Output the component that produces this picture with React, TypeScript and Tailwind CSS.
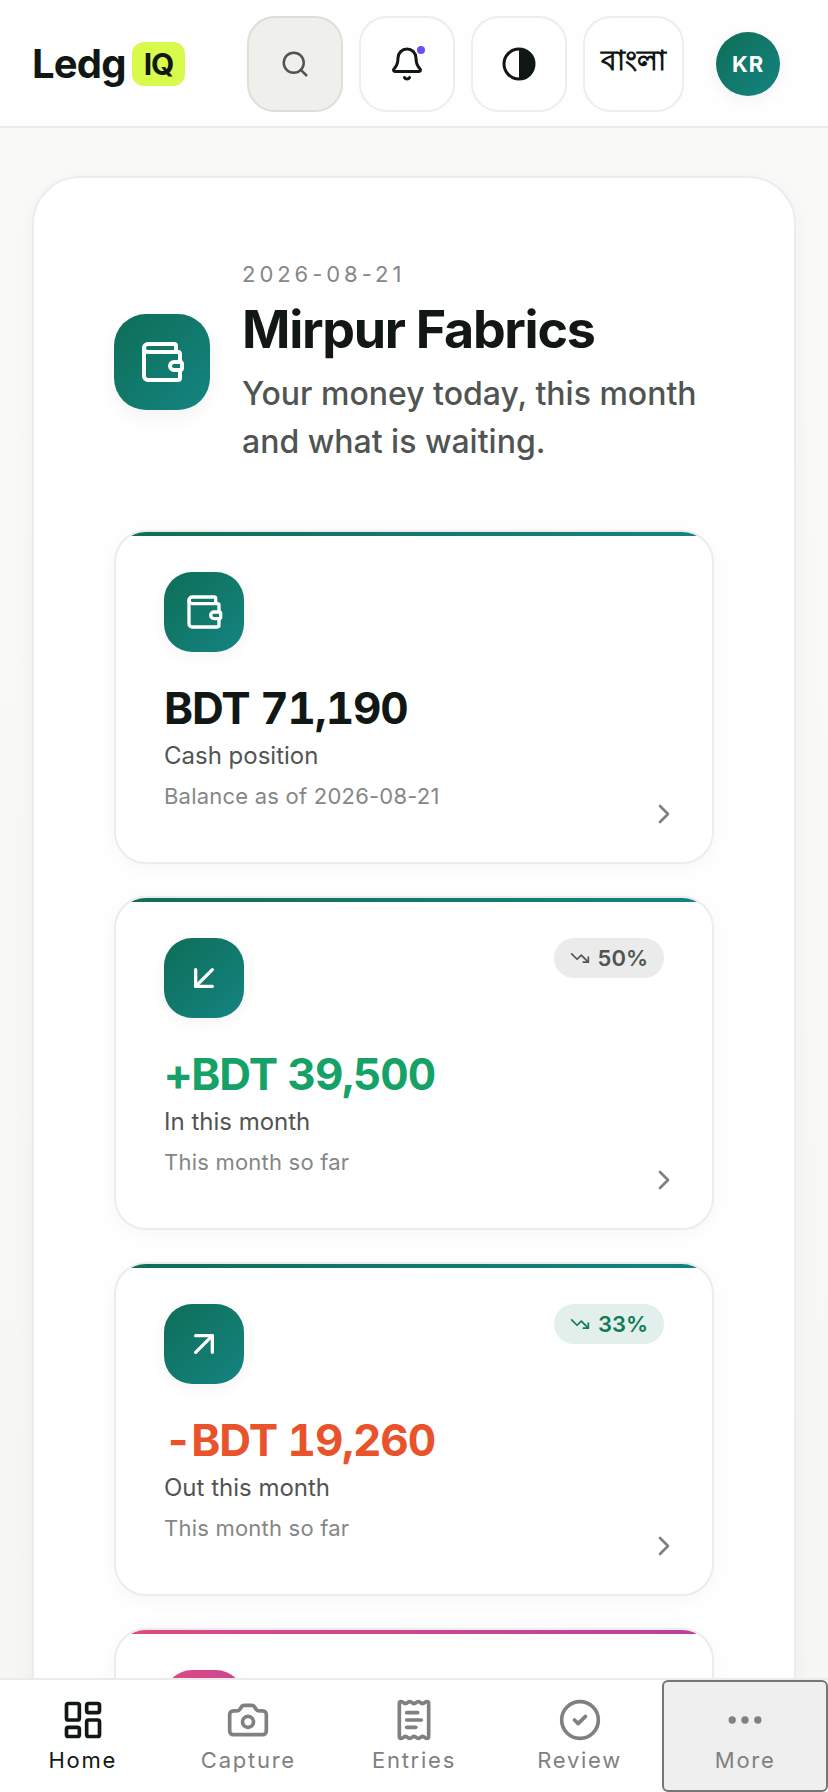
import { ArrowDownLeft, ArrowUpRight, Bell, Camera, ChevronRight, CircleCheck, Clock, Ellipsis, LayoutDashboard, LucideIcon, ReceiptText, Search, TrendingDown, Wallet } from "lucide-react";

type CardType = {
    icon: LucideIcon;
    value: string;
    label: string;
    note: string;
    valueColor: string;
    tone: string;
    bar: string;
    badge?: string;
    badgeColor?: string;
};

const green = "bg-linear-to-br from-[#0f6e56] to-[#148482]";
const greenBar = "bg-linear-to-r from-[#0f6e56] to-[#148482]";

const cards: CardType[] = [
    {
        icon: Wallet,
        value: "BDT 71,190",
        label: "Cash position",
        note: "Balance as of 2026-08-21",
        valueColor: "text-[#111714]",
        tone: green,
        bar: greenBar,
    },
    {
        icon: ArrowDownLeft,
        value: "+BDT 39,500",
        label: "In this month",
        note: "This month so far",
        valueColor: "text-[#16a267]",
        tone: green,
        bar: greenBar,
        badge: "50%",
        badgeColor: "bg-[#ebebeb] text-[#505553]",
    },
    {
        icon: ArrowUpRight,
        value: "-BDT 19,260",
        label: "Out this month",
        note: "This month so far",
        valueColor: "text-[#e8532b]",
        tone: green,
        bar: greenBar,
        badge: "33%",
        badgeColor: "bg-[#e2efea] text-[#0f7b5a]",
    },
];

const cardBox = "relative block overflow-hidden rounded-[32px] border-2 border-[#ececec] bg-white px-12 pt-10 pb-12 shadow-[0_4px_24px_rgba(0,0,0,0.04)]";
const cardIcon = "flex size-20 items-center justify-center rounded-[28px] text-white shadow-[0_4px_16px_rgba(0,0,0,0.05)]";

const MoneyCard = ({ card }: { card: CardType }) => {
    const CardIcon = card.icon;
    return (
        <a href="#" className={cardBox}>
            <span className={`absolute inset-x-0 top-0 h-1 ${card.bar}`}></span>
            <div className="flex items-start justify-between">
                <span className={`${cardIcon} ${card.tone}`}>
                    <CardIcon className="size-10" />
                </span>
                {card.badge && (
                    <span className={`flex h-10 items-center gap-2 rounded-full px-4 text-[22px] font-semibold ${card.badgeColor}`}>
                        <TrendingDown className="size-5" />
                        {card.badge}
                    </span>
                )}
            </div>
            <p className={`mt-8 text-[44px] leading-12 font-bold tracking-[-0.025em] tabular-nums ${card.valueColor}`}>{card.value}</p>
            <p className="mt-1.5 text-2xl leading-9 text-[#505553]">{card.label}</p>
            <p className="mt-1 text-[22px] leading-9 tracking-[0.01em] text-[#858786]">{card.note}</p>
            <ChevronRight className="absolute right-8 bottom-8 size-8 text-[#7f8180]" />
        </a>
    );
}

const iconButton = "relative flex h-24 min-w-24 items-center justify-center rounded-[28px] border-2";

const Header = () => {
    return (
        <header className="flex items-center justify-between border-b-2 border-[#ebebeb] bg-[#fefefe] px-8 pt-4 pb-3.5">
            <a href="#" className="flex items-center gap-1.5 text-[40px] font-bold tracking-[-0.02em]">
                Ledg
                <span className="flex h-11 items-center rounded-xl bg-[#d8fb4b] px-3 text-[30px] tracking-[-0.04em]">IQ</span>
            </a>
            <div className="flex items-center gap-4">
                <button aria-label="Search" className={`${iconButton} border-[#dcdeda] bg-[#eff0eb] text-[#505553]`}>
                    <Search className="size-[30px]" />
                </button>
                <button aria-label="Notifications" className={`${iconButton} border-[#ededed] bg-white`}>
                    <Bell className="size-9" />
                    <span className="absolute top-7 right-7 size-2 rounded-full bg-[#6d4df6]"></span>
                </button>
                <button aria-label="Theme" className={`${iconButton} border-[#ededed] bg-white`}>
                    <svg viewBox="0 0 24 24" className="size-9" fill="none" stroke="currentColor" strokeWidth={2} aria-hidden="true">
                        <circle cx="12" cy="12" r="10" />
                        <path d="M12 2a10 10 0 0 1 0 20z" fill="currentColor" stroke="none" />
                    </svg>
                </button>
                <button lang="bn" className={`${iconButton} border-[#ededed] bg-white px-4 pb-2 text-[28px] font-semibold`}>
                    বাংলা
                </button>
                <button aria-label="Account" className="px-4">
                    <span className={`flex size-16 items-center justify-center rounded-full text-[22px] font-bold tracking-[0.04em] text-white shadow-[0_4px_16px_rgba(0,0,0,0.05)] ${green}`}>KR</span>
                </button>
            </div>
        </header>
    );
}

const navItems = [
    { name: "Home", icon: LayoutDashboard },
    { name: "Capture", icon: Camera },
    { name: "Entries", icon: ReceiptText },
    { name: "Review", icon: CircleCheck },
];

const BottomNav = () => {
    return (
        <nav className="grid shrink-0 grid-cols-5 border-t-2 border-[#ebebeb] bg-white text-[22px] leading-7 text-[#7f8180]">
            {navItems.map((item, index) => (
                <a key={item.name} href="#" className={`flex h-28 flex-col items-center justify-center gap-1 tracking-[0.08em] ${index === 0 ? "text-[#111714]" : ""}`}>
                    <item.icon className="size-11" />
                    {item.name}
                </a>
            ))}
            <button className="flex h-28 flex-col items-center justify-center gap-1 rounded-md border-2 border-[#767676] bg-[#efefef] tracking-[0.08em]">
                <Ellipsis className="size-11" />
                More
            </button>
        </nav>
    );
}

const App = () => {
    return (
        <div className="flex h-screen flex-col bg-linear-to-b from-[#fafaf8] to-[#f6f6f4] font-['Inter','Noto_Sans',sans-serif] text-[#111714]">
            <Header />
            <main className="min-h-0 flex-1 overflow-y-auto px-8 py-12 [scrollbar-width:none]">
                <section className="rounded-[48px] border-2 border-[#ececec] bg-white p-20 shadow-[0_4px_24px_rgba(0,0,0,0.04)]">
                    <div className="flex items-center gap-8">
                        <span className={`flex size-24 shrink-0 items-center justify-center rounded-[32px] text-white shadow-[0_8px_20px_rgba(0,0,0,0.05)] ${green}`}>
                            <Wallet className="size-12" />
                        </span>
                        <div>
                            <p className="text-[22px] leading-8 tracking-[0.18em] text-[#858786]">2026-08-21</p>
                            <h1 className="mt-1.5 text-[52px] leading-[68px] font-bold tracking-[-0.025em]">Mirpur Fabrics</h1>
                            <p className="mt-1.5 text-[32px] leading-12 font-medium text-[#505553]">Your money today, this month and what is waiting.</p>
                        </div>
                    </div>
                    <div className="mt-16 grid gap-8">
                        {cards.map((card) => (
                            <MoneyCard key={card.label} card={card} />
                        ))}
                        {/* still empty, only its coloured head is shown */}
                        <div className={cardBox}>
                            <span className="absolute inset-x-0 top-0 h-1 bg-linear-to-r from-[#de4a82] to-[#b8429c]"></span>
                            <span className={`${cardIcon} bg-linear-to-br from-[#de4a82] to-[#b8429c]`}>
                                <Clock className="size-10" />
                            </span>
                        </div>
                    </div>
                </section>
            </main>
            <BottomNav />
        </div>
    );
}

export default App;
